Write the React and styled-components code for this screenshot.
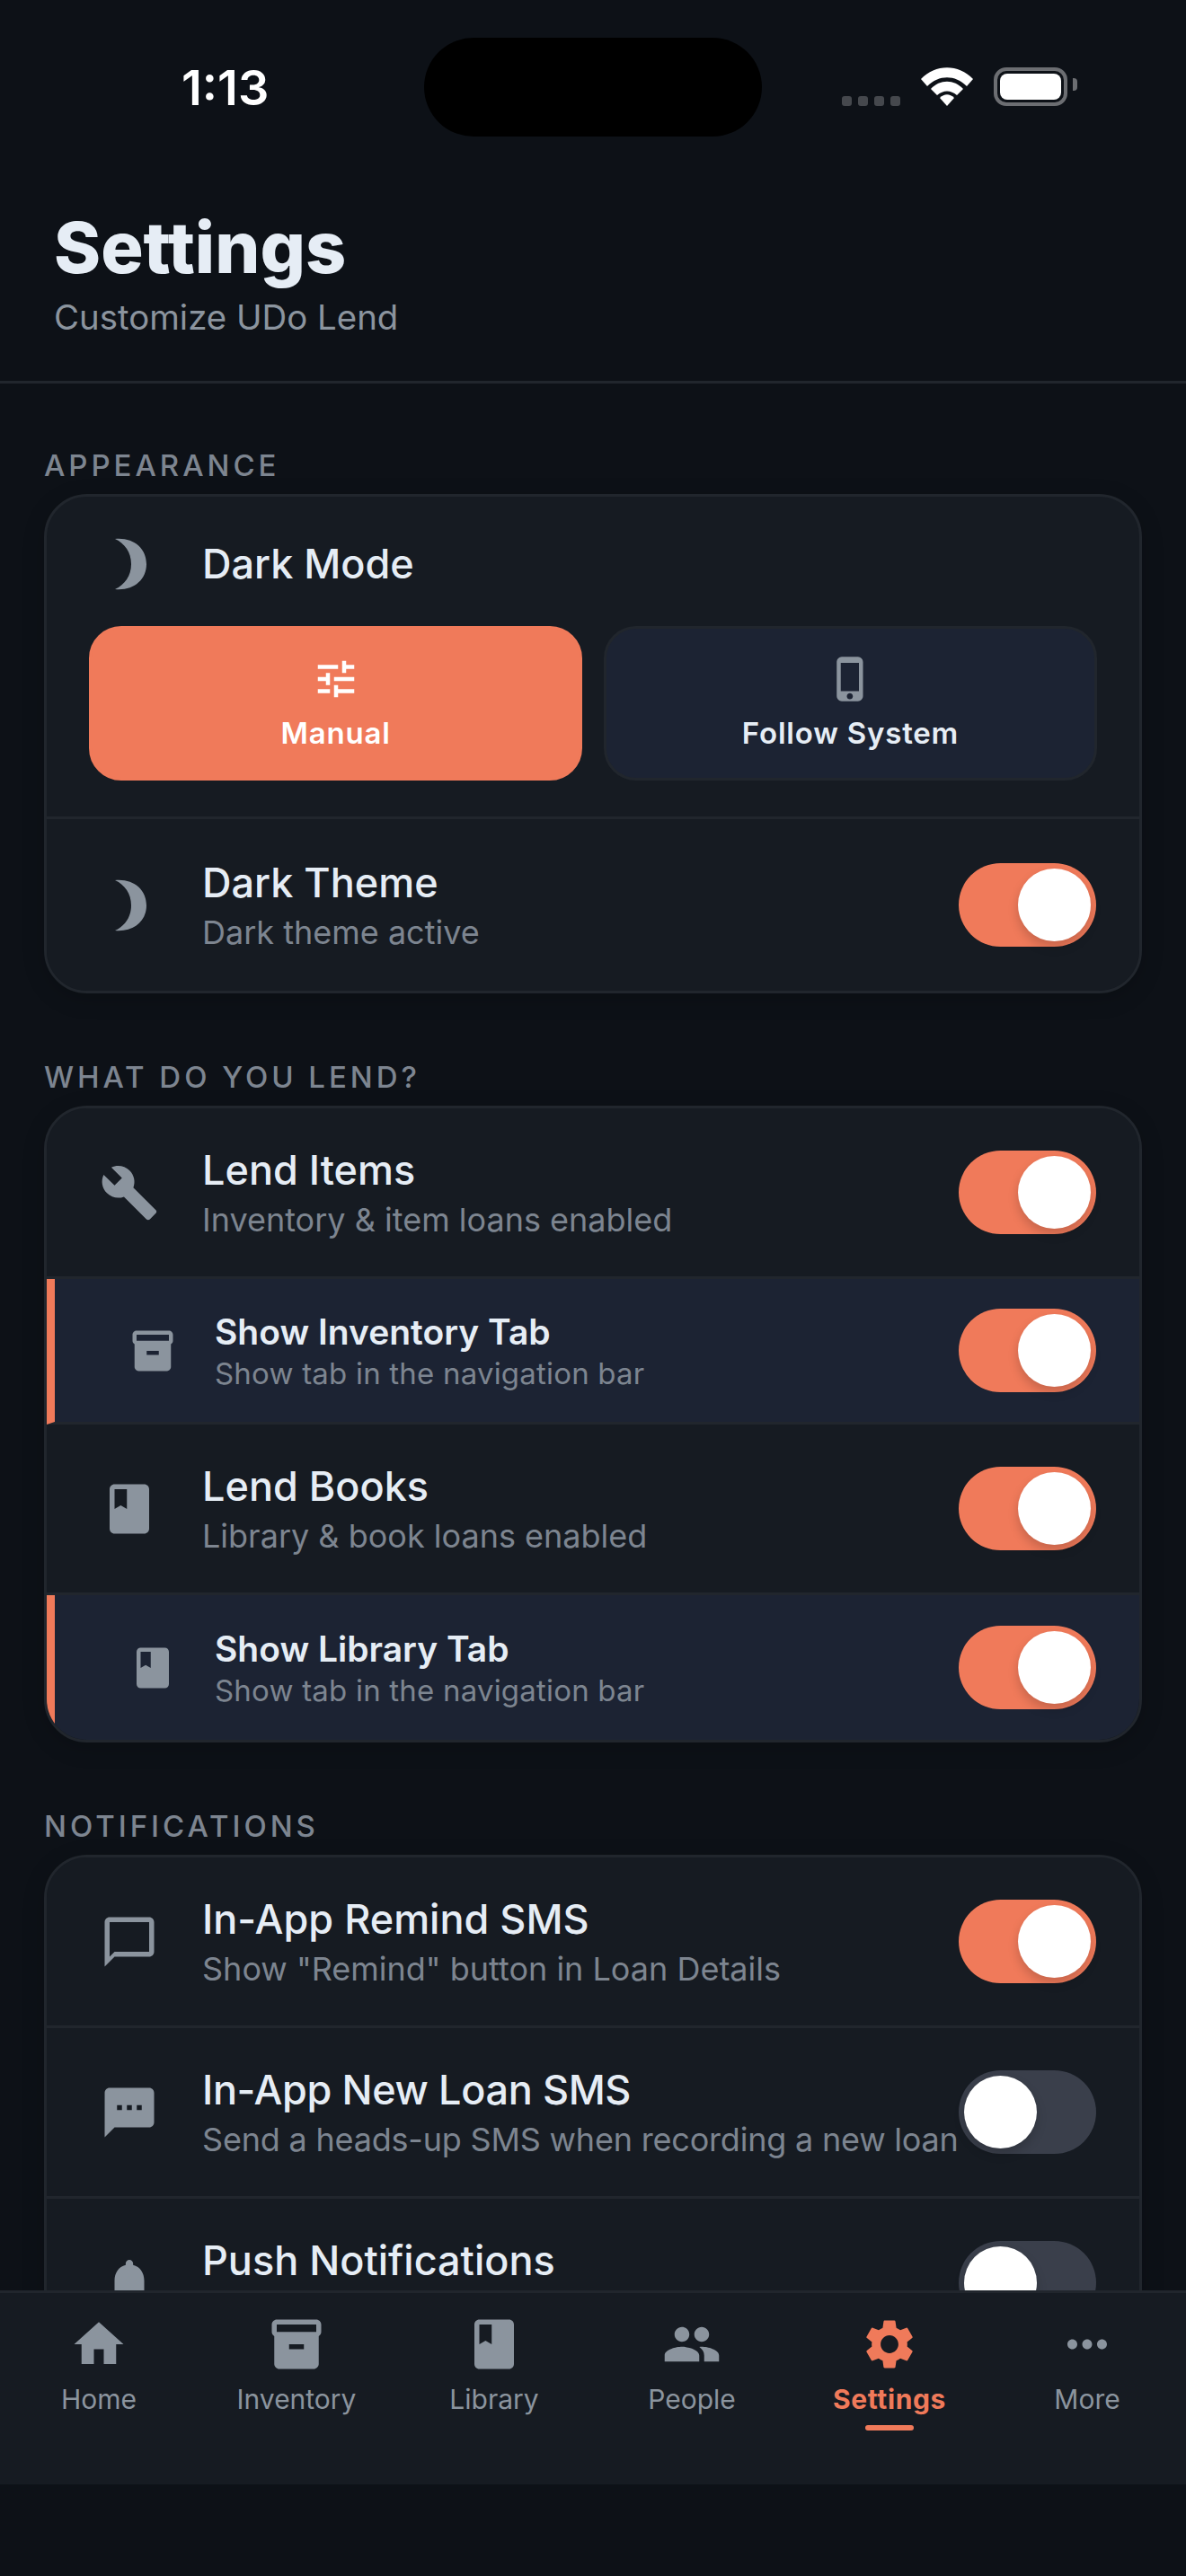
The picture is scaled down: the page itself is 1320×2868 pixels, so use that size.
import styled, { createGlobalStyle } from "styled-components";
import {
  MdBook,
  MdBuild,
  MdChatBubbleOutline,
  MdHome,
  MdInventory2,
  MdMoreHoriz,
  MdNotifications,
  MdPeople,
  MdPhoneIphone,
  MdSettings,
  MdSms,
  MdTune,
} from "react-icons/md";

const ACCENT = "#f07a5a";

const GlobalStyle = createGlobalStyle`
  html, body {
    margin: 0;
    padding: 0;
    background: #0d1117;
  }
  * {
    box-sizing: border-box;
  }
`;

const Moon = ({ size = 66 }) => (
  <svg width={size} height={size} viewBox="0 0 66 66" fill="#8b949e">
    <path d="M17 5 C37 3 52 15 52 33 C52 51 37 63 17 61 C28 56 35 46 35 33 C35 20 28 10 17 5 Z" />
  </svg>
);

const Page = styled.div`
  width: 1320px;
  height: 2868px;
  display: flex;
  flex-direction: column;
  overflow: hidden;
  background: #0d1117;
  font-family: Inter, "Liberation Sans", sans-serif;
`;

const StatusBar = styled.div`
  display: flex;
  align-items: flex-start;
  height: 190px;
  padding: 42px 0 0 202px;
  flex-shrink: 0;
`;

const Time = styled.div`
  width: 270px;
  height: 110px;
  line-height: 112px;
  font-size: 54px;
  font-weight: 600;
  color: #ffffff;
`;

const Island = styled.div`
  width: 376px;
  height: 110px;
  border-radius: 55px;
  background: #000000;
`;

const StatusIcons = styled.div`
  display: flex;
  align-items: flex-end;
  height: 76px;
  margin-left: 89px;
`;

const SignalDots = styled.div`
  display: flex;
  gap: 7px;
  margin-right: 23px;
`;

const SignalDot = styled.span`
  width: 11px;
  height: 11px;
  border-radius: 3px;
  background: #45484d;
`;

const Battery = styled.div`
  position: relative;
  width: 82px;
  height: 43px;
  margin-left: 23px;
  padding: 3px;
  border: 4px solid #6c6e72;
  border-radius: 14px;
`;

const BatteryFill = styled.div`
  width: 100%;
  height: 100%;
  border-radius: 8px;
  background: #ffffff;
`;

const BatteryTip = styled.div`
  position: absolute;
  top: 8px;
  right: -15px;
  width: 5px;
  height: 14px;
  border-radius: 0 4px 4px 0;
  background: #6c6e72;
`;

const Header = styled.header`
  height: 237px;
  padding: 37px 60px 0;
  border-bottom: 3px solid #21262d;
  flex-shrink: 0;
`;

const Title = styled.h1`
  margin: 0;
  font-size: 79px;
  line-height: 96px;
  font-weight: 800;
  color: #e6edf5;
`;

const Subtitle = styled.p`
  margin: 6px 0 0;
  font-size: 38.4px;
  line-height: 48px;
  color: #8b949e;
`;

const Scroll = styled.main`
  flex: 1;
  min-height: 0;
  overflow: hidden;
  padding: 71px 49px 0;
`;

const Section = styled.section`
  & + & {
    margin-top: 73px;
  }
`;

const SectionLabel = styled.h2`
  margin: 0 0 12px;
  font-size: 33px;
  line-height: 40px;
  font-weight: 500;
  letter-spacing: 3.96px;
  color: #7d8590;
`;

const Card = styled.div`
  overflow: hidden;
  border: 3px solid #21262d;
  border-radius: 48px;
  background: #161b22;
  box-shadow: 0 6px 24px rgba(0, 0, 0, 0.18);
`;

const Row = styled.div`
  display: flex;
  align-items: center;
  min-height: ${(p) => (p.$sub ? (p.$last ? "161px" : "162px") : p.$last ? "191px" : "190px")};
  padding: ${(p) => (p.$sub ? "0 48px 0 67px" : "0 48px")};
  background: ${(p) => (p.$sub ? "#1c2333" : "#161b22")};
  border-left: ${(p) => (p.$sub ? `9px solid ${ACCENT}` : "none")};
  border-bottom: ${(p) => (p.$last ? "none" : "3px solid #21262d")};
`;

const IconBox = styled.div`
  display: flex;
  align-items: center;
  justify-content: center;
  flex-shrink: 0;
  width: ${(p) => (p.$sub ? "84px" : "88px")};
  margin-right: ${(p) => (p.$sub ? "27px" : "37px")};
  color: #8b949e;
`;

const RowText = styled.div`
  flex: 1;
  min-width: 0;
`;

const RowTitle = styled.div`
  font-size: ${(p) => (p.$sub ? "39px" : "45px")};
  line-height: ${(p) => (p.$sub ? "50px" : "58px")};
  font-weight: ${(p) => (p.$sub ? 600 : 500)};
  letter-spacing: ${(p) => (p.$tight ? "-0.37px" : "0")};
  color: #e6edf5;
`;

const RowSub = styled.div`
  margin-top: ${(p) => (p.$sub ? "0" : "2px")};
  font-size: ${(p) => (p.$sub ? "33px" : "36px")};
  line-height: ${(p) => (p.$sub ? "42px" : "48px")};
  letter-spacing: ${(p) => (p.$sub ? "0.2px" : p.$tight ? "-0.2px" : "0")};
  white-space: nowrap;
  color: #7d8590;
`;

const ModeRow = styled.div`
  display: flex;
  align-items: center;
  height: 144px;
  padding: 6px 48px 0;
`;

const ModeButtons = styled.div`
  display: grid;
  grid-template-columns: 1fr 1fr;
  gap: 24px;
  padding: 0 47px 40px 47px;
  border-bottom: 3px solid #21262d;
`;

const ModeButton = styled.div`
  display: flex;
  flex-direction: column;
  align-items: center;
  height: 172px;
  padding-top: 29px;
  border: 3px solid ${(p) => (p.$active ? ACCENT : "#21262d")};
  border-radius: 36px;
  background: ${(p) => (p.$active ? ACCENT : "#1c2333")};
  color: ${(p) => (p.$active ? "#ffffff" : "#e6edf5")};
`;

const ModeLabel = styled.span`
  margin-top: 11px;
  font-size: 33px;
  line-height: 44px;
  font-weight: 600;
  letter-spacing: 0.8px;
`;

const Toggle = styled.div`
  position: relative;
  flex-shrink: 0;
  width: 153px;
  height: 93px;
  border-radius: 47px;
  background: ${(p) => (p.$on ? ACCENT : "#3a3f4b")};
`;

const Thumb = styled.div`
  position: absolute;
  top: 6px;
  left: ${(p) => (p.$on ? "66px" : "6px")};
  width: 81px;
  height: 81px;
  border-radius: 50%;
  background: #ffffff;
  box-shadow: 0 6px 12px rgba(0, 0, 0, 0.18);
`;

const TabBar = styled.nav`
  display: grid;
  grid-template-columns: repeat(6, 220px);
  height: 216px;
  padding-top: 24px;
  flex-shrink: 0;
  background: #161b22;
  border-top: 3px solid #21262d;
`;

const Tab = styled.div`
  display: flex;
  flex-direction: column;
  align-items: center;
  color: ${(p) => (p.$active ? ACCENT : "#8b949e")};
`;

const TabLabel = styled.span`
  margin-top: 6px;
  font-size: 30px;
  line-height: 44px;
  font-weight: ${(p) => (p.$active ? 700 : 400)};
  letter-spacing: ${(p) => (p.$active ? "0.6px" : "0")};
`;

const TabMark = styled.span`
  width: 54px;
  height: 6px;
  margin-top: 7px;
  border-radius: 3px;
  background: ${ACCENT};
`;

const BottomInset = styled.div`
  height: 102px;
  flex-shrink: 0;
`;

const Switch = ({ on }) => (
  <Toggle $on={on}>
    <Thumb $on={on} />
  </Toggle>
);

const SettingRow = ({ icon: Icon, title, sub, on, child, last, tight }) => (
  <Row $sub={child} $last={last}>
    <IconBox $sub={child}>
      <Icon size={child ? 54 : 66} />
    </IconBox>
    <RowText>
      <RowTitle $sub={child} $tight={tight}>{title}</RowTitle>
      <RowSub $sub={child} $tight={tight}>{sub}</RowSub>
    </RowText>
    <Switch on={on} />
  </Row>
);

const tabs = [
  { label: "Home", icon: MdHome },
  { label: "Inventory", icon: MdInventory2 },
  { label: "Library", icon: MdBook },
  { label: "People", icon: MdPeople },
  { label: "Settings", icon: MdSettings, active: true },
  { label: "More", icon: MdMoreHoriz },
];

export default function App() {
  return (
    <Page>
      <GlobalStyle />
      <StatusBar>
        <Time>1:13</Time>
        <Island />
        <StatusIcons>
          <SignalDots>
            <SignalDot />
            <SignalDot />
            <SignalDot />
            <SignalDot />
          </SignalDots>
          <svg width="58" height="43" viewBox="0 0 58 43" fill="#fff">
            <path d="M0 13 C16 -4 42 -4 58 13 L51 21 C38 8 20 8 7 21 Z" />
            <path d="M11 24 C21 13 37 13 47 24 L40 31 C33 25 25 25 18 31 Z" />
            <path d="M21 34 C26 29 32 29 37 34 L29 43 Z" />
          </svg>
          <Battery>
            <BatteryFill />
            <BatteryTip />
          </Battery>
        </StatusIcons>
      </StatusBar>
      <Header>
        <Title>Settings</Title>
        <Subtitle>Customize UDo Lend</Subtitle>
      </Header>
      <Scroll>
        <Section>
          <SectionLabel>APPEARANCE</SectionLabel>
          <Card>
            <ModeRow>
              <IconBox>
                <Moon />
              </IconBox>
              <RowTitle>Dark Mode</RowTitle>
            </ModeRow>
            <ModeButtons>
              <ModeButton $active>
                <MdTune size={54} />
                <ModeLabel>Manual</ModeLabel>
              </ModeButton>
              <ModeButton>
                <MdPhoneIphone size={54} color="#8b949e" />
                <ModeLabel>Follow System</ModeLabel>
              </ModeButton>
            </ModeButtons>
            <SettingRow icon={Moon} title="Dark Theme" sub="Dark theme active" on last />
          </Card>
        </Section>
        <Section>
          <SectionLabel>WHAT DO YOU LEND?</SectionLabel>
          <Card>
            <SettingRow icon={MdBuild} title="Lend Items" sub="Inventory & item loans enabled" on />
            <SettingRow icon={MdInventory2} title="Show Inventory Tab" sub="Show tab in the navigation bar" on child />
            <SettingRow icon={MdBook} title="Lend Books" sub="Library & book loans enabled" on />
            <SettingRow icon={MdBook} title="Show Library Tab" sub="Show tab in the navigation bar" on child last />
          </Card>
        </Section>
        <Section>
          <SectionLabel>NOTIFICATIONS</SectionLabel>
          <Card>
            <SettingRow icon={MdChatBubbleOutline} title="In-App Remind SMS" sub={'Show "Remind" button in Loan Details'} on />
            <SettingRow icon={MdSms} title="In-App New Loan SMS" sub="Send a heads-up SMS when recording a new loan" tight />
            <SettingRow icon={MdNotifications} title="Push Notifications" sub={"\u00a0"} />
          </Card>
        </Section>
      </Scroll>
      <TabBar>
        {tabs.map(({ label, icon: Icon, active }) => (
          <Tab key={label} $active={active}>
            <Icon size={66} />
            <TabLabel $active={active}>{label}</TabLabel>
            {active && <TabMark />}
          </Tab>
        ))}
      </TabBar>
      <BottomInset />
    </Page>
  );
}
